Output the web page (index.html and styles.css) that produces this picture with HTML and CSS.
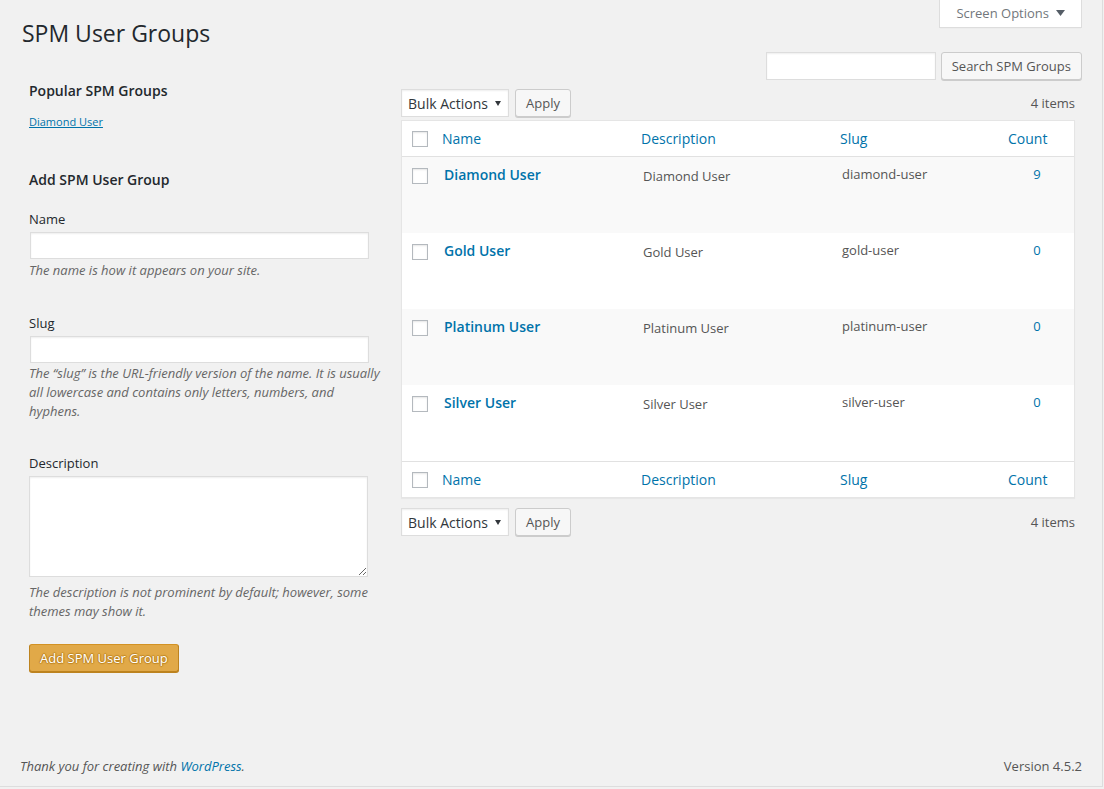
FILE: index.html
```html
<!DOCTYPE html>
<html lang="en">
<head>
<meta charset="utf-8">
<title>SPM User Groups</title>
<link rel="stylesheet" href="styles.css">
</head>
<body>
<div class="page">
  <div class="content">
    <div class="topline">
      <h1 class="title">SPM User Groups</h1>
      <div class="screen-tab">Screen Options
        <svg class="tab-arrow" width="9" height="6" viewBox="0 0 9 6"><path d="M0 0H9L4.5 6Z" fill="#555d66"/></svg>
      </div>
    </div>
    <div class="search-row">
      <div class="text-input search-input"></div>
      <button class="btn">Search SPM Groups</button>
    </div>
    <div class="columns">
      <div class="col-left">
        <h2 class="section-title popular-title">Popular SPM Groups</h2>
        <p class="tagcloud"><a href="#">Diamond User</a></p>
        <h2 class="section-title add-title">Add SPM User Group</h2>
        <div class="field">
          <label class="field-label">Name</label>
          <div class="text-input field-input"></div>
          <p class="description">The name is how it appears on your site.</p>
        </div>
        <div class="field">
          <label class="field-label">Slug</label>
          <div class="text-input field-input"></div>
          <p class="description">The “slug” is the URL-friendly version of the name. It is usually all lowercase and contains only letters, numbers, and hyphens.</p>
        </div>
        <div class="field field-last">
          <label class="field-label">Description</label>
          <textarea class="field-textarea"></textarea>
          <p class="description desc-area">The description is not prominent by default; however, some themes may show it.</p>
        </div>
        <button class="btn btn-primary">Add SPM User Group</button>
      </div>
      <div class="col-right">
        <div class="tablenav tablenav-top">
          <div class="actions">
            <div class="select">Bulk Actions <svg width="6" height="5" viewBox="0 0 6 5"><path d="M0 0H6L3 5Z" fill="#32373c"/></svg></div>
            <button class="btn">Apply</button>
          </div>
          <div class="num-items">4 items</div>
        </div>
        <table class="list-table">
          <colgroup>
            <col class="c-check"><col class="c-name"><col class="c-desc"><col class="c-slug"><col class="c-count">
          </colgroup>
          <thead>
            <tr>
              <th class="check"><span class="checkbox"></span></th>
              <th><a href="#">Name</a></th>
              <th><a href="#">Description</a></th>
              <th><a href="#">Slug</a></th>
              <th><a href="#">Count</a></th>
            </tr>
          </thead>
          <tbody>
            <tr class="alt">
              <td class="check"><span class="checkbox"></span></td>
              <td class="name"><a href="#" class="row-title">Diamond User</a></td>
              <td class="desc">Diamond User</td>
              <td class="slug">diamond-user</td>
              <td class="count"><a href="#">9</a></td>
            </tr>
            <tr>
              <td class="check"><span class="checkbox"></span></td>
              <td class="name"><a href="#" class="row-title">Gold User</a></td>
              <td class="desc">Gold User</td>
              <td class="slug">gold-user</td>
              <td class="count"><a href="#">0</a></td>
            </tr>
            <tr class="alt">
              <td class="check"><span class="checkbox"></span></td>
              <td class="name"><a href="#" class="row-title">Platinum User</a></td>
              <td class="desc">Platinum User</td>
              <td class="slug">platinum-user</td>
              <td class="count"><a href="#">0</a></td>
            </tr>
            <tr>
              <td class="check"><span class="checkbox"></span></td>
              <td class="name"><a href="#" class="row-title">Silver User</a></td>
              <td class="desc">Silver User</td>
              <td class="slug">silver-user</td>
              <td class="count"><a href="#">0</a></td>
            </tr>
          </tbody>
          <tfoot>
            <tr>
              <th class="check"><span class="checkbox"></span></th>
              <th><a href="#">Name</a></th>
              <th><a href="#">Description</a></th>
              <th><a href="#">Slug</a></th>
              <th><a href="#">Count</a></th>
            </tr>
          </tfoot>
        </table>
        <div class="tablenav tablenav-bottom">
          <div class="actions">
            <div class="select">Bulk Actions <svg width="6" height="5" viewBox="0 0 6 5"><path d="M0 0H6L3 5Z" fill="#32373c"/></svg></div>
            <button class="btn">Apply</button>
          </div>
          <div class="num-items">4 items</div>
        </div>
      </div>
    </div>
  </div>
  <div class="footer">
    <p class="footer-left">Thank you for creating with <a href="#">WordPress</a>.</p>
    <p class="footer-right">Version 4.5.2</p>
  </div>
</div>
</body>
</html>
```
FILE: styles.css
```css
* { box-sizing: border-box; }
html, body { margin: 0; background: #f1f1f1; }
body {
  font-family: "Open Sans", "Liberation Sans", sans-serif;
  font-size: 13px;
  color: #444;
}
a { color: #0073aa; text-decoration: none; }

.page {
  width: 1103px;
  height: 787px;
  border-right: 1px solid #ddd;
  border-bottom: 1px solid #ddd;
  display: flex;
  flex-direction: column;
  justify-content: space-between;
}
.content { padding: 0 20px 0 22px; }

.topline { display: flex; justify-content: space-between; align-items: flex-start; }
.title {
  margin: 0;
  padding: 19px 0 4px;
  font-size: 23px;
  font-weight: 400;
  line-height: 29px;
  color: #23282d;
}
.screen-tab {
  height: 28px;
  padding: 3px 16px 4px 16px;
  border: 1px solid #ddd;
  border-top: 0;
  background: #fff;
  color: #72777c;
  line-height: 20px;
  display: flex;
  align-items: center;
  gap: 7px;
  box-shadow: 0 1px 1px -1px rgba(0,0,0,.1);
}

.search-row { display: flex; justify-content: flex-end; gap: 5px; height: 28px; }
.text-input {
  background: #fff;
  border: 1px solid #ddd;
  box-shadow: inset 0 1px 2px rgba(0,0,0,.07);
}
.search-input { width: 170px; height: 28px; }

.btn {
  height: 28px;
  padding: 0 10px;
  border: 1px solid #ccc;
  border-radius: 3px;
  background: #f7f7f7;
  box-shadow: 0 1px 0 #ccc;
  color: #555;
  font-family: inherit;
  font-size: 13px;
  line-height: 26px;
  white-space: nowrap;
}
.btn-primary {
  margin-top: 23px;
  background: #e1a948;
  border-color: #d39223 #bd831f #bd831f;
  box-shadow: 0 1px 0 #bd831f;
  color: #fff;
  text-shadow: 0 -1px 1px #bd831f, 1px 0 1px #bd831f, 0 1px 1px #bd831f, -1px 0 1px #bd831f;
}

.columns { display: flex; }
.col-left { width: 372px; padding: 0 7px; }
.col-right { flex: 1; padding: 0 7px; }

.section-title {
  margin: 0;
  font-size: 14px;
  font-weight: 600;
  line-height: 20px;
  color: #23282d;
}
.popular-title { margin-top: 1px; }
.tagcloud { margin: 13px 0 0; font-size: 11px; line-height: 15px; }
.tagcloud a { text-decoration: underline; }
.add-title { margin-top: 41px; }

.field { margin-top: 19px; }
.field + .field { margin-top: 33px; }
.field + .field-last { margin-top: 32px; }
.field-label { display: block; line-height: 20px; color: #23282d; }
.field-input { width: 339px; height: 27px; margin: 3px 0 0 1px; }
.field-textarea {
  display: block;
  width: 339px;
  height: 101px;
  margin: 3px 0 0;
  border: 1px solid #ddd;
  box-shadow: inset 0 1px 2px rgba(0,0,0,.07);
  background: #fff;
  resize: both;
  font-family: inherit;
}
.description {
  margin: 1.5px 0 0;
  font-style: italic;
  line-height: 19px;
  color: #666;
}
.desc-area { margin-top: 6px; }

.tablenav { display: flex; align-items: center; justify-content: space-between; height: 28px; }
.tablenav-top { margin-top: 9px; }
.tablenav-bottom { margin-top: 10px; }
.actions { display: flex; gap: 6px; }
.select {
  width: 108px;
  height: 28px;
  padding: 0 7px 0 6px;
  border: 1px solid #ddd;
  background: #fff;
  box-shadow: inset 0 1px 2px rgba(0,0,0,.07);
  color: #32373c;
  font-size: 14px;
  display: flex;
  align-items: center;
  justify-content: space-between;
}
.num-items { color: #555; }

.list-table {
  margin-top: 3px;
  width: 100%;
  table-layout: fixed;
  border-collapse: separate;
  border-spacing: 0;
  border: 1px solid #e5e5e5;
  background: #fff;
  box-shadow: 0 1px 1px rgba(0,0,0,.04);
}
.c-check { width: 30px; }
.c-name { width: 199px; }
.c-desc { width: 199px; }
.c-slug { width: 169px; }
.c-count { width: 75px; }

.list-table th {
  padding: 8px 10px;
  font-size: 14px;
  font-weight: 400;
  line-height: 19px;
  text-align: left;
  vertical-align: top;
}
.list-table thead th { border-bottom: 1px solid #e1e1e1; }
.list-table tfoot th { border-top: 1px solid #e1e1e1; }
.list-table th:last-child { padding-left: 9px; }
.list-table th.check { padding: 10px 0 0 10px; }

.list-table tbody tr { height: 76px; }
.list-table tbody tr.alt { background: #f9f9f9; }
.list-table td {
  padding: 8px 10px 8px 12px;
  vertical-align: top;
  color: #555;
  line-height: 19.5px;
}
.list-table td.check { padding: 11px 0 0 10px; }
.list-table td.desc { padding-top: 10px; }
.list-table td.count { text-align: center; padding: 8px 0 8px 1px; }
.row-title { font-size: 14px; font-weight: 600; line-height: 19px; }

.checkbox {
  display: block;
  width: 16px;
  height: 16px;
  border: 1px solid #b4b9be;
  background: #fff;
  box-shadow: inset 0 1px 2px rgba(0,0,0,.1);
}

.footer {
  display: flex;
  justify-content: space-between;
  padding: 10px 20px;
  color: #555;
  line-height: 20px;
}
.footer p { margin: 0; }
.footer-left { font-style: italic; }
```
